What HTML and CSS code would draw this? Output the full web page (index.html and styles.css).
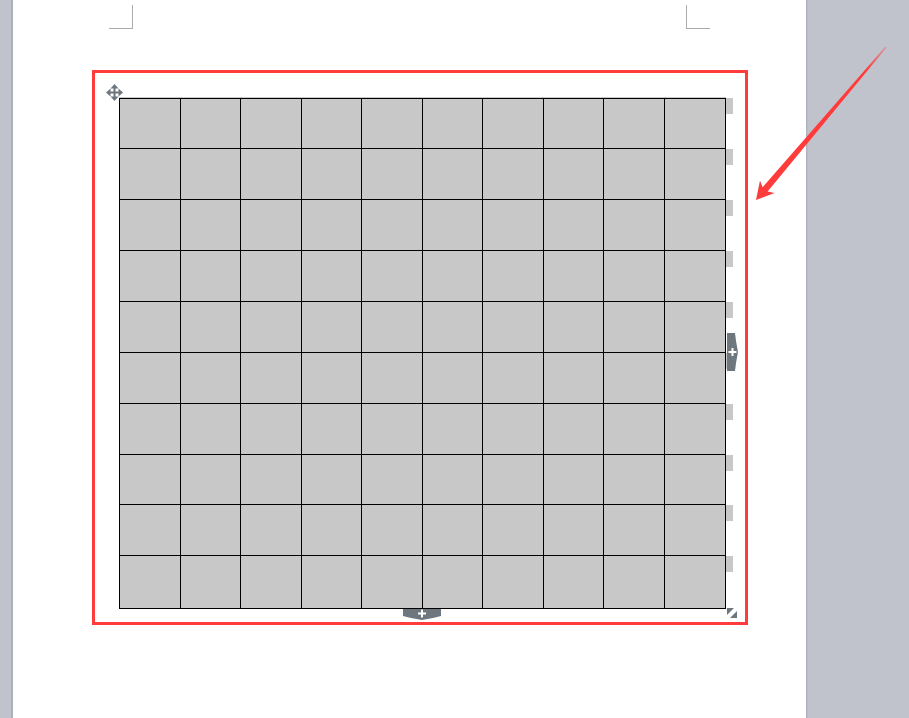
FILE: index.html
```html
<!DOCTYPE html>
<html lang="en">
<head>
    <meta charset="UTF-8">
    <meta name="viewport" content="width=device-width, initial-scale=1.0">
    <title>Table</title>
    <link rel="stylesheet" href="styles.css">
</head>
<body>
    <div class="desk">
        <div class="page">
            <div class="marks">
                <span class="mark mark-left"></span>
                <span class="mark mark-right"></span>
            </div>
            <div class="frame">
                <svg class="move" width="17" height="17" viewBox="0 0 17 17">
                    <polygon points="8.5,0 12.5,4.5 4.5,4.5" />
                    <polygon points="8.5,17 12.5,12.5 4.5,12.5" />
                    <polygon points="0,8.5 4.5,4.5 4.5,12.5" />
                    <polygon points="17,8.5 12.5,4.5 12.5,12.5" />
                    <rect x="7.5" y="3" width="2" height="11" />
                    <rect x="3" y="7.5" width="11" height="2" />
                </svg>
                <div class="table-wrap">
                    <div class="grid" id="grid"></div>
                    <div class="tabs" id="tabs"></div>
                </div>
                <svg class="add-col" width="11" height="38" viewBox="0 0 11 38">
                    <path d="M0 0 H8 L9 8 L11 19 L9 30 L8 38 H0 Z" />
                    <rect x="1.5" y="18" width="8" height="2" fill="#fff" />
                    <rect x="4.5" y="15" width="2" height="8" fill="#fff" />
                </svg>
                <svg class="add-row" width="38" height="11" viewBox="0 0 38 11">
                    <path d="M0 0 H38 V7 L30 9 L19 11 L8 9 L0 7 Z" />
                    <rect x="15" y="3.5" width="8" height="2" fill="#fff" />
                    <rect x="18" y="0.5" width="2" height="8" fill="#fff" />
                </svg>
                <svg class="resize" width="10" height="10" viewBox="0 0 10 10">
                    <polygon points="0,0 7,0 0,7" />
                    <polygon points="10,3 10,10 3,10" />
                </svg>
            </div>
        </div>
        <div class="side"></div>
    </div>
    <svg class="arrow" width="909" height="718" viewBox="0 0 909 718">
        <defs>
            <linearGradient id="fade" x1="886" y1="47" x2="756" y2="200" gradientUnits="userSpaceOnUse">
                <stop offset="0" stop-color="#ff3b3b" stop-opacity="0.3" />
                <stop offset="0.15" stop-color="#ff3b3b" />
                <stop offset="1" stop-color="#ff3b3b" />
            </linearGradient>
        </defs>
        <polygon fill="url(#fade)" points="756,200 760,180.5 762.6,187.2 885.4,46.6 886.6,47.4 767.6,191.4 774.5,193" />
    </svg>
    <script>
        const grid = document.getElementById('grid');
        const tabs = document.getElementById('tabs');
        for (let i = 0; i < 100; i++) {
            const cell = document.createElement('div');
            cell.className = 'cell';
            grid.appendChild(cell);
        }
        for (let i = 0; i < 10; i++) {
            const row = document.createElement('div');
            row.className = 'tab-row';
            row.innerHTML = '<span class="tab"></span>';
            tabs.appendChild(row);
        }
    </script>
</body>
</html>
```

FILE: styles.css
```css
body {
    margin: 0;
    padding: 0;
    background: #c1c3cc;
    font-family: "Liberation Sans", Arial, sans-serif;
    overflow: hidden;
}
.desk {
    display: flex;
    height: 718px;
    padding-left: 11px;
    background: #c1c3cc;
}
.page {
    width: 793px;
    height: 718px;
    background: #fff;
    border-left: 2px solid #adb0b8;
    box-shadow: 1px 0 0 #b0b3bb, 2px 0 1px #b8bbc3;
}
.marks {
    display: flex;
    justify-content: space-between;
    padding: 5px 96px 0 96px;
}
.mark {
    width: 23px;
    height: 23px;
    border-bottom: 1px solid #ababab;
}
.mark-left {
    border-right: 1px solid #ababab;
}
.mark-right {
    border-left: 1px solid #ababab;
}
.frame {
    position: relative;
    width: 650px;
    height: 549px;
    margin: 41px 0 0 79px;
    border: 3px solid #ff3b3b;
}
.table-wrap {
    display: flex;
    align-items: flex-start;
    margin: 25px 0 0 24px;
}
.grid {
    display: grid;
    grid-template-columns: 61px 60px 61px 60px 61px 60px 61px 60px 61px 61px;
    grid-template-rows: 50px 51px 51px 51px 51px 51px 51px 50px 51px 53px;
    border-top: 1px solid #000;
    border-left: 1px solid #000;
    box-shadow: 0 -1px 0 #c8c8c8;
}
.cell {
    background: #c8c8c8;
    border-right: 1px solid #000;
    border-bottom: 1px solid #000;
}
.tabs {
    display: grid;
    grid-template-rows: 51px 51px 51px 51px 51px 51px 51px 50px 51px 53px;
}
.tab {
    display: block;
    width: 7px;
    height: 16px;
    background: #c8c8c8;
}
.move {
    position: absolute;
    left: 11px;
    top: 11px;
    fill: #6e767e;
}
.add-col {
    position: absolute;
    left: 632px;
    top: 260px;
    fill: #6e767e;
}
.add-row {
    position: absolute;
    left: 308px;
    top: 536px;
    fill: #6e767e;
}
.resize {
    position: absolute;
    left: 632px;
    top: 535px;
    fill: #6e767e;
}
.arrow {
    position: absolute;
    left: 0;
    top: 0;
    pointer-events: none;
}
```
